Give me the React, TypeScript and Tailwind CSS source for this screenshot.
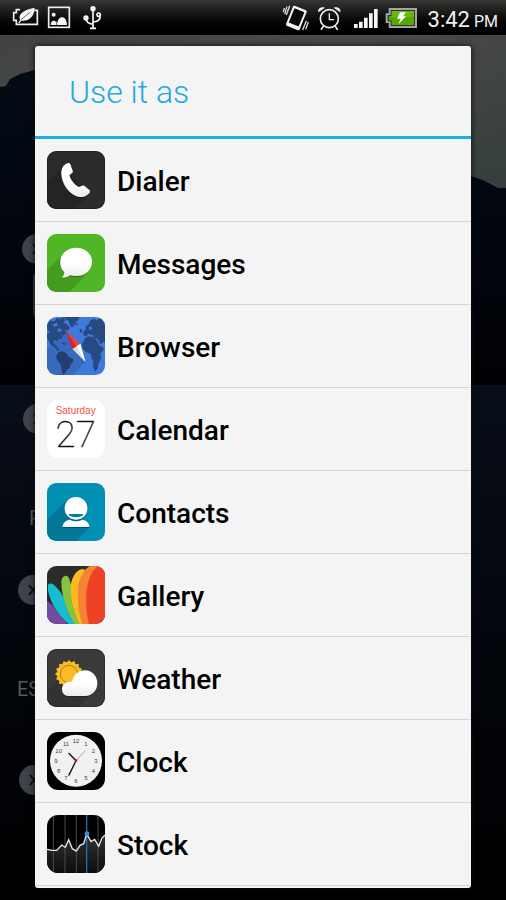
import type { ReactNode } from "react";

function Tile({ id, viewBox, bg, children, radius = 28 }: { id: string; viewBox: [number, number]; bg: string; children: ReactNode; radius?: number }) {
  const [x, y] = viewBox;
  return (
    <svg className="size-[58px] shrink-0" viewBox={`${x} ${y} 174 174`} aria-hidden="true">
      <defs>
        <clipPath id={`${id}-clip`}>
          <rect x={x} y={y} width="174" height="174" rx={radius} />
        </clipPath>
        <filter id={`${id}-shadow`} x="-20%" y="-20%" width="140%" height="140%">
          <feDropShadow dx="0" dy="3" stdDeviation="2" floodColor="#000" floodOpacity="0.3" />
        </filter>
        <linearGradient id={`${id}-white`} x1="0" y1="0" x2="0" y2="1">
          <stop offset="0.5" stopColor="#ffffff" />
          <stop offset="1" stopColor="#ececec" />
        </linearGradient>
      </defs>
      <g clipPath={`url(#${id}-clip)`}>
        <rect x={x} y={y} width="174" height="174" fill={bg} />
        {children}
      </g>
    </svg>
  );
}

function DialerIcon() {
  return (
    <Tile id="dialer" viewBox={[33, 33]} bg="#2b2b2b">
      <path d="M76 84L33 127V207H116L161 160Z" fill="#242424" />
      <path
        d="M97 69C100 69 102 71 103 73L110 92C111 95 110 97 108 99L100 106C104 120 114 133 128 141L139 137C142 136 144 136 146 138L160 150C163 153 163 156 160 159C151 170 140 173 127 170C99 163 76 131 76 99C76 84 84 71 97 69Z"
        fill="url(#dialer-white)"
        filter="url(#dialer-shadow)"
      />
      <rect x="34" y="34" width="172" height="172" rx="28" fill="none" stroke="#191919" strokeWidth="2" />
    </Tile>
  );
}

function MessagesIcon() {
  return (
    <Tile id="messages" viewBox={[33, 282]} bg="#50b626">
      <path d="M83 340L33 390V456H101L157 396Z" fill="#439c20" />
      <path
        d="M121 323C148 323 168 341 168 365C168 390 148 408 121 408C114 408 108 407 102 405C95 411 86 414 77 413C82 409 85 403 85 396C76 388 73 377 73 365C73 341 94 323 121 323Z"
        fill="url(#messages-white)"
        filter="url(#messages-shadow)"
      />
    </Tile>
  );
}

function BrowserIcon() {
  return (
    <Tile id="browser" viewBox={[33, 33]} bg="#4079dc">
      <path d="M33 128L93 76L148 168L110 207H33Z" fill="#3769bd" />
      <path
        d="M33 56L42 43L54 47L62 36L72 40L80 33L88 42L82 50L92 54L102 65L96 74L88 72L91 84L82 88L76 98L67 99L63 107L56 102L52 110L61 118L65 127L72 132L66 135L55 124L44 116L33 94V84L42 78L34 70ZM48 56L56 62L66 59L62 50ZM66 67L64 76L73 79L78 70Z"
        fill="#284a82"
        fillRule="evenodd"
      />
      <path d="M84 33H131L126 43L118 50L112 62L106 64L100 55L98 44L88 40Z" fill="#284a82" />
      <path d="M66 140L77 136L91 141L98 152L111 159L112 166L104 174L101 185L92 192L87 202L81 207L77 193L74 176L62 160L61 149Z" fill="#243f6d" />
      <path
        d="M142 77L150 69L148 62L158 55L162 44L174 38L182 43L193 36L207 42V111L201 108L194 116L188 104L181 96L174 99L172 88L164 86L156 83L151 91L141 88ZM158 64L160 72L168 70L166 61Z"
        fill="#284a82"
        fillRule="evenodd"
      />
      <path d="M146 98L156 91L172 94L184 105L190 119L201 124L203 132L193 143L196 157L188 171L185 188L177 197L171 184L172 168L166 154L164 143L151 139L139 128L138 114Z" fill="#284a82" />
      <path d="M117 52L125 51L125 56L118 58ZM130 70L136 68L139 78L133 81ZM74 108L85 110L93 115L84 116Z" fill="#284a82" />
      <g filter="url(#browser-shadow)">
        <path d="M92 77L133 114L109 129Z" fill="#ea4540" />
        <path d="M92 77L121 121L109 129Z" fill="#d92125" />
        <path d="M133 114L148 168L109 129Z" fill="#d6dae0" />
        <path d="M133 114L148 168L121 121Z" fill="#ffffff" />
      </g>
    </Tile>
  );
}

function CalendarIcon() {
  return (
    <Tile id="calendar" viewBox={[33, 282]} bg="#ffffff" radius={34}>
      <text x="119" y="324" textAnchor="middle" fontSize="30" fill="#fb5049" className="font-['Liberation_Sans',sans-serif]">
        Saturday
      </text>
      <text x="119" y="423" textAnchor="middle" fontSize="110" fill="#111" stroke="#111" strokeWidth="1" className="font-['Roboto','Lato',sans-serif] font-thin">
        27
      </text>
    </Tile>
  );
}

function ContactsIcon() {
  return (
    <Tile id="contacts" viewBox={[33, 33]} bg="#028fb4">
      <path d="M94 84L33 145V207H121L162 165Z" fill="#027798" />
      <g filter="url(#contacts-shadow)">
        <path d="M79 165C80 153 89 145 102 143C112 149 128 149 138 143C151 145 160 153 161 165Z" fill="url(#contacts-white)" />
        <circle cx="120" cy="109" r="34" fill="#fff" />
      </g>
      <path d="M97 126H143C137 139 103 139 97 126Z" fill="#027fa2" />
    </Tile>
  );
}

function GalleryIcon() {
  return (
    <Tile id="gallery" viewBox={[33, 282]} bg="#2b2b2b">
      <path d="M33 386C55 402 78 428 94 456H33Z" fill="#764b9f" />
      <path d="M36 338C45 330 55 338 64 349C84 373 107 412 121 456H98C73 433 45 400 36 356Z" fill="#12bdd1" filter="url(#gallery-shadow)" />
      <path d="M76 330C77 310 93 306 99 318C108 350 121 400 132 456H116C94 423 76 370 76 330Z" fill="#83c441" filter="url(#gallery-shadow)" />
      <path d="M106 330C115 301 129 290 143 291C149 294 148 305 148 318L146 456H130C110 412 99 365 106 330Z" fill="#fdb822" filter="url(#gallery-shadow)" />
      <path d="M128 336C137 302 155 280 170 280L190 284L170 456H139C127 412 122 369 128 336Z" fill="#f58235" filter="url(#gallery-shadow)" />
      <path d="M151 365C155 319 171 289 190 282H207V456H159C152 426 149 393 151 365Z" fill="#ee4328" filter="url(#gallery-shadow)" />
    </Tile>
  );
}

function WeatherIcon() {
  const rays = Array.from({ length: 16 }, (_, i) => i * 22.5);
  return (
    <Tile id="weather" viewBox={[33, 33]} bg="#3a3a3a">
      <path d="M62 130L33 159V207H127L178 156Z" fill="#323232" />
      <g fill="#fbbc25">
        <circle cx="99" cy="108" r="35" />
        {rays.map((angle) => (
          <path key={angle} d="M91 75L99 66L107 75Z" transform={`rotate(${angle} 99 108)`} />
        ))}
      </g>
      <circle cx="99" cy="108" r="26" fill="none" stroke="#7d601e" strokeWidth="2" />
      <path
        d="M97 174C86 174 78 165 78 153C78 141 88 131 102 131C110 132 109 127 111 122C117 106 131 97 147 97C168 97 184 114 184 136C184 158 168 174 147 174Z"
        fill="url(#weather-white)"
        filter="url(#weather-shadow)"
      />
      <rect x="34" y="34" width="172" height="172" rx="28" fill="none" stroke="#262626" strokeWidth="2" />
    </Tile>
  );
}

function ClockIcon() {
  const hours = Array.from({ length: 12 }, (_, i) => i + 1);
  return (
    <Tile id="clock" viewBox={[33, 282]} bg="#000000" radius={34}>
      <circle cx="120" cy="368" r="78" fill="#f1f1f1" />
      {hours.map((hour) => {
        const angle = (hour * Math.PI) / 6;
        return (
          <text
            key={hour}
            x={120 + 60 * Math.sin(angle)}
            y={375 - 60 * Math.cos(angle)}
            textAnchor="middle"
            fontSize="18"
            fill="#444"
            className="font-['Liberation_Sans',sans-serif]"
          >
            {hour}
          </text>
        );
      })}
      <path d="M98 345L120 368L98 413" fill="none" stroke="#111" strokeWidth="4" />
      <path d="M114 375L148 338" stroke="#e2604f" strokeWidth="2" />
      <circle cx="120" cy="368" r="4" fill="#c1121a" />
    </Tile>
  );
}

function StockIcon() {
  return (
    <Tile id="stock" viewBox={[33, 43]} bg="#000000" radius={34}>
      <defs>
        <linearGradient id="stock-area" x1="0" y1="0" x2="0" y2="1">
          <stop offset="0" stopColor="#333" />
          <stop offset="1" stopColor="#0c0c0c" />
        </linearGradient>
      </defs>
      <path
        d="M33 146L48 149H62L77 133L88 140L98 117L109 144L121 151L132 134L143 129L152 100L165 123L176 116L188 137L198 112L207 103V217H33Z"
        fill="url(#stock-area)"
      />
      <path d="M52 43V217M87 43V217M121 43V217M186 43V217" stroke="#4b4b4b" strokeWidth="3" />
      <path d="M152 43V217" stroke="#1b6fae" strokeWidth="4" />
      <path
        d="M33 146L48 149H62L77 133L88 140L98 117L109 144L121 151L132 134L143 129L152 100L165 123L176 116L188 137L198 112L207 103"
        fill="none"
        stroke="#e8e8e8"
        strokeWidth="4"
      />
      <circle cx="153" cy="99" r="7" fill="#2495ea" />
    </Tile>
  );
}

const apps: { name: string; icon: ReactNode }[] = [
  { name: "Dialer", icon: <DialerIcon /> },
  { name: "Messages", icon: <MessagesIcon /> },
  { name: "Browser", icon: <BrowserIcon /> },
  { name: "Calendar", icon: <CalendarIcon /> },
  { name: "Contacts", icon: <ContactsIcon /> },
  { name: "Gallery", icon: <GalleryIcon /> },
  { name: "Weather", icon: <WeatherIcon /> },
  { name: "Clock", icon: <ClockIcon /> },
  { name: "Stock", icon: <StockIcon /> },
];

function StatusBar() {
  return (
    <header className="relative flex h-[35px] items-center justify-between bg-linear-to-b from-[#363634] to-black pr-2 pl-3 text-[#f2f2f2]">
      <svg className="h-[35px] w-[92px]" viewBox="36 0 276 105" aria-label="Power saver, picture saved, USB connected" role="img">
        <path d="M60 29H49V38H41V61H49V73H112V31H103" fill="none" stroke="#eee" strokeWidth="5" />
        <path d="M55 68L60 60C54 43 68 30 104 23C103 45 91 65 64 62L59 69Z" fill="#f5f5f5" />
        <path d="M62 60L91 36" stroke="#222" strokeWidth="2" />
        <rect x="146" y="22" width="62" height="60" fill="none" stroke="#eee" strokeWidth="5" />
        <circle cx="161" cy="44" r="6" fill="#f5f5f5" />
        <path d="M152 75C152 65 157 62 163 62C169 62 171 65 172 70C173 59 179 52 186 52C194 52 200 59 201 75Z" fill="#f5f5f5" />
        <path d="M170 75C170 68 167 63 166 60" stroke="#111" strokeWidth="2" fill="none" />
        <g stroke="#f5f5f5" fill="none" strokeWidth="5">
          <path d="M279 24V84M270 85H288M258 54C259 68 266 71 279 73M297 46C304 54 298 65 279 66" />
          <circle cx="296" cy="44" r="5" />
        </g>
        <circle cx="279" cy="26" r="8" fill="#f5f5f5" />
        <circle cx="258" cy="54" r="8" fill="#f5f5f5" />
      </svg>
      <div className="flex items-center gap-2.5">
        <svg className="h-[35px] w-[136px]" viewBox="87 0 408 105" aria-label="Vibrate, alarm set, full signal, battery charging" role="img">
          <g transform="rotate(22 130 54)">
            <rect x="108" y="22" width="44" height="64" rx="4" fill="#f5f5f5" />
            <rect x="114" y="29" width="32" height="46" fill="#080808" />
          </g>
          <path d="M110 17L100 45M102 20L95 42M94 24L91 36M160 62L149 90M166 66L158 88" stroke="#ddd" strokeWidth="4" />
          <g fill="none" stroke="#eee">
            <circle cx="229" cy="56" r="27" strokeWidth="5" />
            <path d="M229 40V59H243" strokeWidth="4" />
            <path d="M212 78L204 89M246 78L254 89" strokeWidth="5" />
          </g>
          <path d="M196 37C193 26 204 18 216 23ZM262 37C265 26 254 18 242 23Z" fill="#f5f5f5" />
          <path d="M303 72H314V84H303ZM318 65H329V84H318ZM333 53H344V84H333ZM348 40H359V84H348ZM363 27H374V84H363Z" fill="#f5f5f5" />
          <path d="M407 24H492V84H407V69H398V40H407Z" fill="#a4a4a4" />
          <path d="M413 30H486V78H413V64H404V45H413Z" fill="#333" />
          <path d="M416 33H483V75H416V61H408V48H416Z" fill="#56a800" />
          <path d="M416 33H483V51H416Z" fill="#7cc71b" opacity="0.5" />
          <path d="M441 37H459L450 49H459L436 73L443 56H432Z" fill="#fff" />
        </svg>
        <time className="flex items-baseline gap-1 pt-1 text-[22px] leading-8">
          3:42 <span className="text-base">PM</span>
        </time>
      </div>
    </header>
  );
}

function Wallpaper() {
  return (
    <svg className="absolute inset-0 size-full" viewBox="0 0 506 900" preserveAspectRatio="none" aria-hidden="true">
      <defs>
        <linearGradient id="sky" x1="0" y1="0" x2="1" y2="1">
          <stop offset="0" stopColor="#3f4242" />
          <stop offset="0.45" stopColor="#4a4a49" />
          <stop offset="1" stopColor="#343d3d" />
        </linearGradient>
        <linearGradient id="slope" x1="0" y1="0" x2="0" y2="1">
          <stop offset="0" stopColor="#030c16" />
          <stop offset="0.35" stopColor="#020711" />
          <stop offset="1" stopColor="#000104" />
        </linearGradient>
        <linearGradient id="lake" x1="0" y1="0" x2="0" y2="1">
          <stop offset="0" stopColor="#080e19" />
          <stop offset="0.55" stopColor="#02050a" />
          <stop offset="1" stopColor="#000001" />
        </linearGradient>
      </defs>
      <rect width="506" height="200" fill="url(#sky)" />
      <path d="M0 87L6 86L10 79L20 74L35 70L150 90L471 176L485 181L498 188L506 188V386H0Z" fill="url(#slope)" />
      <rect y="385" width="506" height="515" fill="url(#lake)" />
    </svg>
  );
}

function RemoveBadge({ className }: { className: string }) {
  return (
    <span className={`absolute flex size-[30px] items-center justify-center rounded-full bg-[#3f424a] text-[#0b0e14] ${className}`}>
      <svg className="size-3" viewBox="0 0 12 12" aria-hidden="true">
        <path d="M2 1L10 11M10 1L2 11" stroke="currentColor" strokeWidth="2" />
      </svg>
    </span>
  );
}

function HomeScreen() {
  return (
    <div className="absolute inset-0 overflow-hidden" aria-hidden="true">
      <Wallpaper />
      <RemoveBadge className="top-[234px] left-[22px]" />
      <span className="absolute top-[270px] left-[33px] h-[50px] w-10 rounded-lg bg-[#3b3e46]" />
      <RemoveBadge className="top-[404px] left-[23px]" />
      <RemoveBadge className="top-[575px] left-[18px]" />
      <RemoveBadge className="top-[765px] left-[19px]" />
      <span className="absolute top-[506px] left-[29px] text-xl leading-6 text-[#5a5a5a]">P</span>
      <span className="absolute top-[677px] left-[17px] text-xl leading-6 text-[#5a5a5a]">ES</span>
    </div>
  );
}

export default function App() {
  return (
    <div className="relative flex min-h-screen flex-col bg-black font-['Roboto',sans-serif]">
      <HomeScreen />
      <StatusBar />
      <main className="relative px-[35px] pt-[11px] pb-3">
        <section role="dialog" aria-labelledby="dialog-title" className="overflow-hidden rounded-[3px] bg-[#f4f4f4] pb-0.5 shadow-[0_0_6px_0_#0a0a0a]">
          <h1 id="dialog-title" className="border-b-3 border-[#1cb0e2] px-[34px] pt-[26px] pb-6 text-[32px] leading-10 font-light text-[#1fa9dc]">
            Use it as
          </h1>
          <ul>
            {apps.map((app) => (
              <li key={app.name} className="border-b border-[#d5d5d5]">
                <button type="button" className="flex w-full items-center gap-3 p-3 text-left text-[28px] leading-8 font-medium text-black">
                  {app.icon}
                  <span className="pt-1">{app.name}</span>
                </button>
              </li>
            ))}
          </ul>
        </section>
      </main>
    </div>
  );
}
